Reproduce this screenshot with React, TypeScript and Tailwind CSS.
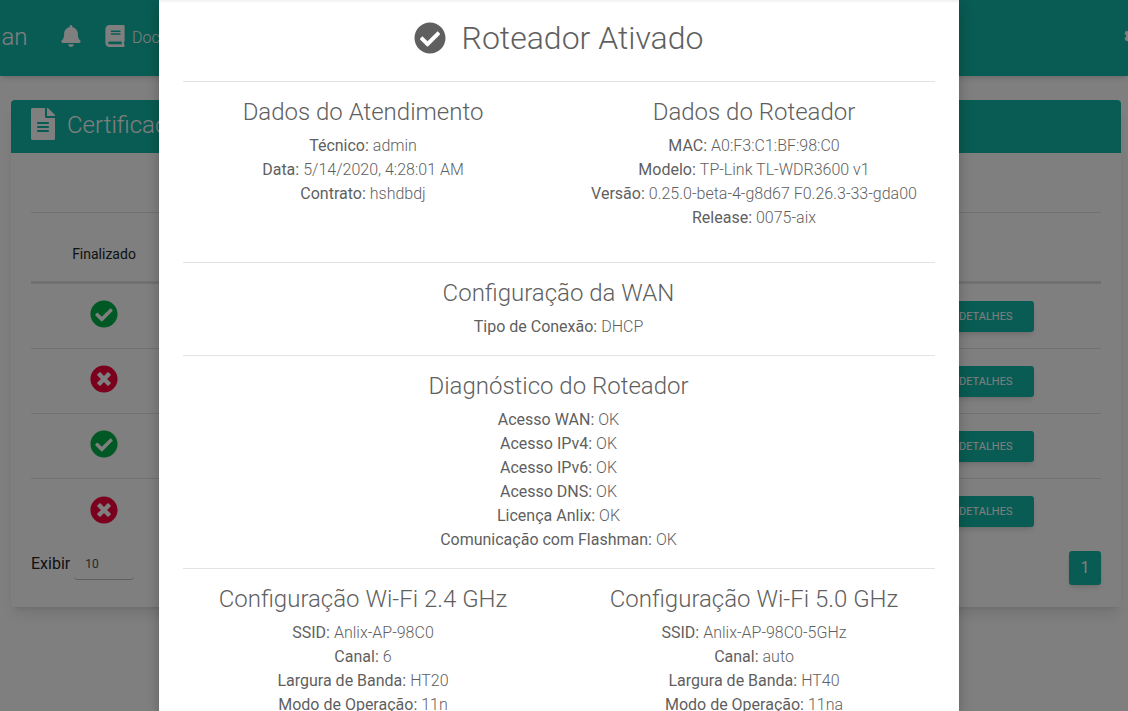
import { FaBell, FaBook, FaCheckCircle, FaCog, FaFileAlt, FaTimesCircle } from "react-icons/fa";

const ROWS = [true, false, true, false];

function Line({ label, value }: { label: string; value: string }) {
  return (
    <p className="h-6 leading-6">
      {label}: <span className="font-light">{value}</span>
    </p>
  );
}

function Section({ title, lines }: { title: string; lines: [string, string][] }) {
  return (
    <div className="pr-px text-center">
      <h4 className="h-[29px] text-2xl leading-[29px] font-light">{title}</h4>
      <div className="mt-[7px]">
        {lines.map(([label, value]) => (
          <Line key={label} label={label} value={value} />
        ))}
      </div>
    </div>
  );
}

function Background() {
  return (
    <div className="h-[711px] overflow-hidden bg-white font-['Roboto',sans-serif] text-[#212529]">
      <header className="flex h-[76px] items-center bg-[#13b8a7] text-white shadow-md">
        <span className="mb-[3px] ml-[-77px] w-[104px] text-2xl font-light">Flashman</span>
        <FaBell className="mb-1 ml-[33px] text-[22px]" />
        <FaBook className="mb-1 ml-[22px] text-[22px]" />
        <span className="ml-[6px] font-light">Documentação</span>
        <FaCog className="mb-1 ml-auto mr-[-12px] text-[16px]" />
      </header>
      <main className="pt-6 pr-[7px] pl-[11px]">
        <section className="h-[507px] rounded bg-white shadow-lg">
          <div className="flex h-[53px] items-center rounded-t bg-[#13b8a7] pl-4 text-white">
            <FaFileAlt className="mb-[5px] text-[32px]" />
            <h2 className="mb-[3px] ml-2 text-2xl font-light">Certificações</h2>
          </div>
          <div className="px-5">
            <div className="mt-[59px] h-px bg-[#dee2e6]" />
            <div className="flex h-[71px] items-center border-b-[3px] border-[#dee2e6]">
              <span className="w-[146px] pt-[14px] text-center text-sm">Finalizado</span>
            </div>
            {ROWS.map((ok, i) => (
              <div key={i} className={`flex h-[65px] items-center justify-between pr-[67px] ${i < 3 ? "border-b border-[#dee2e6]" : ""}`}>
                <span className="mb-1 flex w-[146px] justify-center text-[28px]">
                  {ok ? <FaCheckCircle className="text-[#00b34a]" /> : <FaTimesCircle className="text-[#f5003d]" />}
                </span>
                <button className="h-[31px] w-[120px] rounded-[3px] bg-[#13b8a7] pt-[2px] pl-[45px] text-left text-[11px] text-white shadow-md">
                  DETALHES
                </button>
              </div>
            ))}
            <div className="flex items-start justify-between">
              <div className="mt-[4px] flex items-center">
                <span>Exibir</span>
                <span className="ml-1 h-[32px] w-[60px] rounded border-b border-[#bdbdbd] pl-[11px] text-xs leading-[32px] text-[#495057]">10</span>
              </div>
              <span className="mt-[7px] flex h-[34px] w-8 items-center justify-center rounded-[3px] bg-[#13b8a7] text-white shadow-md">1</span>
            </div>
          </div>
        </section>
      </main>
    </div>
  );
}

function Modal() {
  return (
    <div className="absolute top-0 left-[159px] h-[711px] w-[800px] overflow-hidden bg-white px-6 font-['Roboto',sans-serif] text-[#5f5f5f] shadow-[inset_0_2px_2px_rgba(0,0,0,0.05),0_4px_12px_rgba(0,0,0,0.25)]">
      <div className="flex h-[81px] items-center justify-center pr-px pb-[5px]">
        <FaCheckCircle className="text-[32px]" />
        <h3 className="ml-4 text-[32px] font-light">Roteador Ativado</h3>
      </div>
      <hr className="border-[#e3e3e3]" />
      <div className="-mx-[15px] mt-4 grid h-[164px] grid-cols-2">
        <div className="px-[15px]">
          <Section
            title="Dados do Atendimento"
            lines={[
              ["Técnico", "admin"],
              ["Data", "5/14/2020, 4:28:01 AM"],
              ["Contrato", "hshdbdj"],
            ]}
          />
        </div>
        <div className="px-[15px]">
          <Section
            title="Dados do Roteador"
            lines={[
              ["MAC", "A0:F3:C1:BF:98:C0"],
              ["Modelo", "TP-Link TL-WDR3600 v1"],
              ["Versão", "0.25.0-beta-4-g8d67 F0.26.3-33-gda00"],
              ["Release", "0075-aix"],
            ]}
          />
        </div>
      </div>
      <hr className="border-[#e3e3e3]" />
      <div className="h-[92px] pt-4">
        <Section title="Configuração da WAN" lines={[["Tipo de Conexão", "DHCP"]]} />
      </div>
      <hr className="border-[#e3e3e3]" />
      <div className="h-[212px] pt-4">
        <Section
          title="Diagnóstico do Roteador"
          lines={[
            ["Acesso WAN", "OK"],
            ["Acesso IPv4", "OK"],
            ["Acesso IPv6", "OK"],
            ["Acesso DNS", "OK"],
            ["Licença Anlix", "OK"],
            ["Comunicação com Flashman", "OK"],
          ]}
        />
      </div>
      <hr className="border-[#e3e3e3]" />
      <div className="-mx-[15px] grid grid-cols-2 pt-4">
        <div className="px-[15px]">
          <Section
            title="Configuração Wi-Fi 2.4 GHz"
            lines={[
              ["SSID", "Anlix-AP-98C0"],
              ["Canal", "6"],
              ["Largura de Banda", "HT20"],
              ["Modo de Operação", "11n"],
            ]}
          />
        </div>
        <div className="px-[15px]">
          <Section
            title="Configuração Wi-Fi 5.0 GHz"
            lines={[
              ["SSID", "Anlix-AP-98C0-5GHz"],
              ["Canal", "auto"],
              ["Largura de Banda", "HT40"],
              ["Modo de Operação", "11na"],
            ]}
          />
        </div>
      </div>
    </div>
  );
}

export default function App() {
  return (
    <div className="relative h-[711px] overflow-hidden">
      <Background />
      <div className="absolute inset-0 bg-black/50" />
      <Modal />
    </div>
  );
}
